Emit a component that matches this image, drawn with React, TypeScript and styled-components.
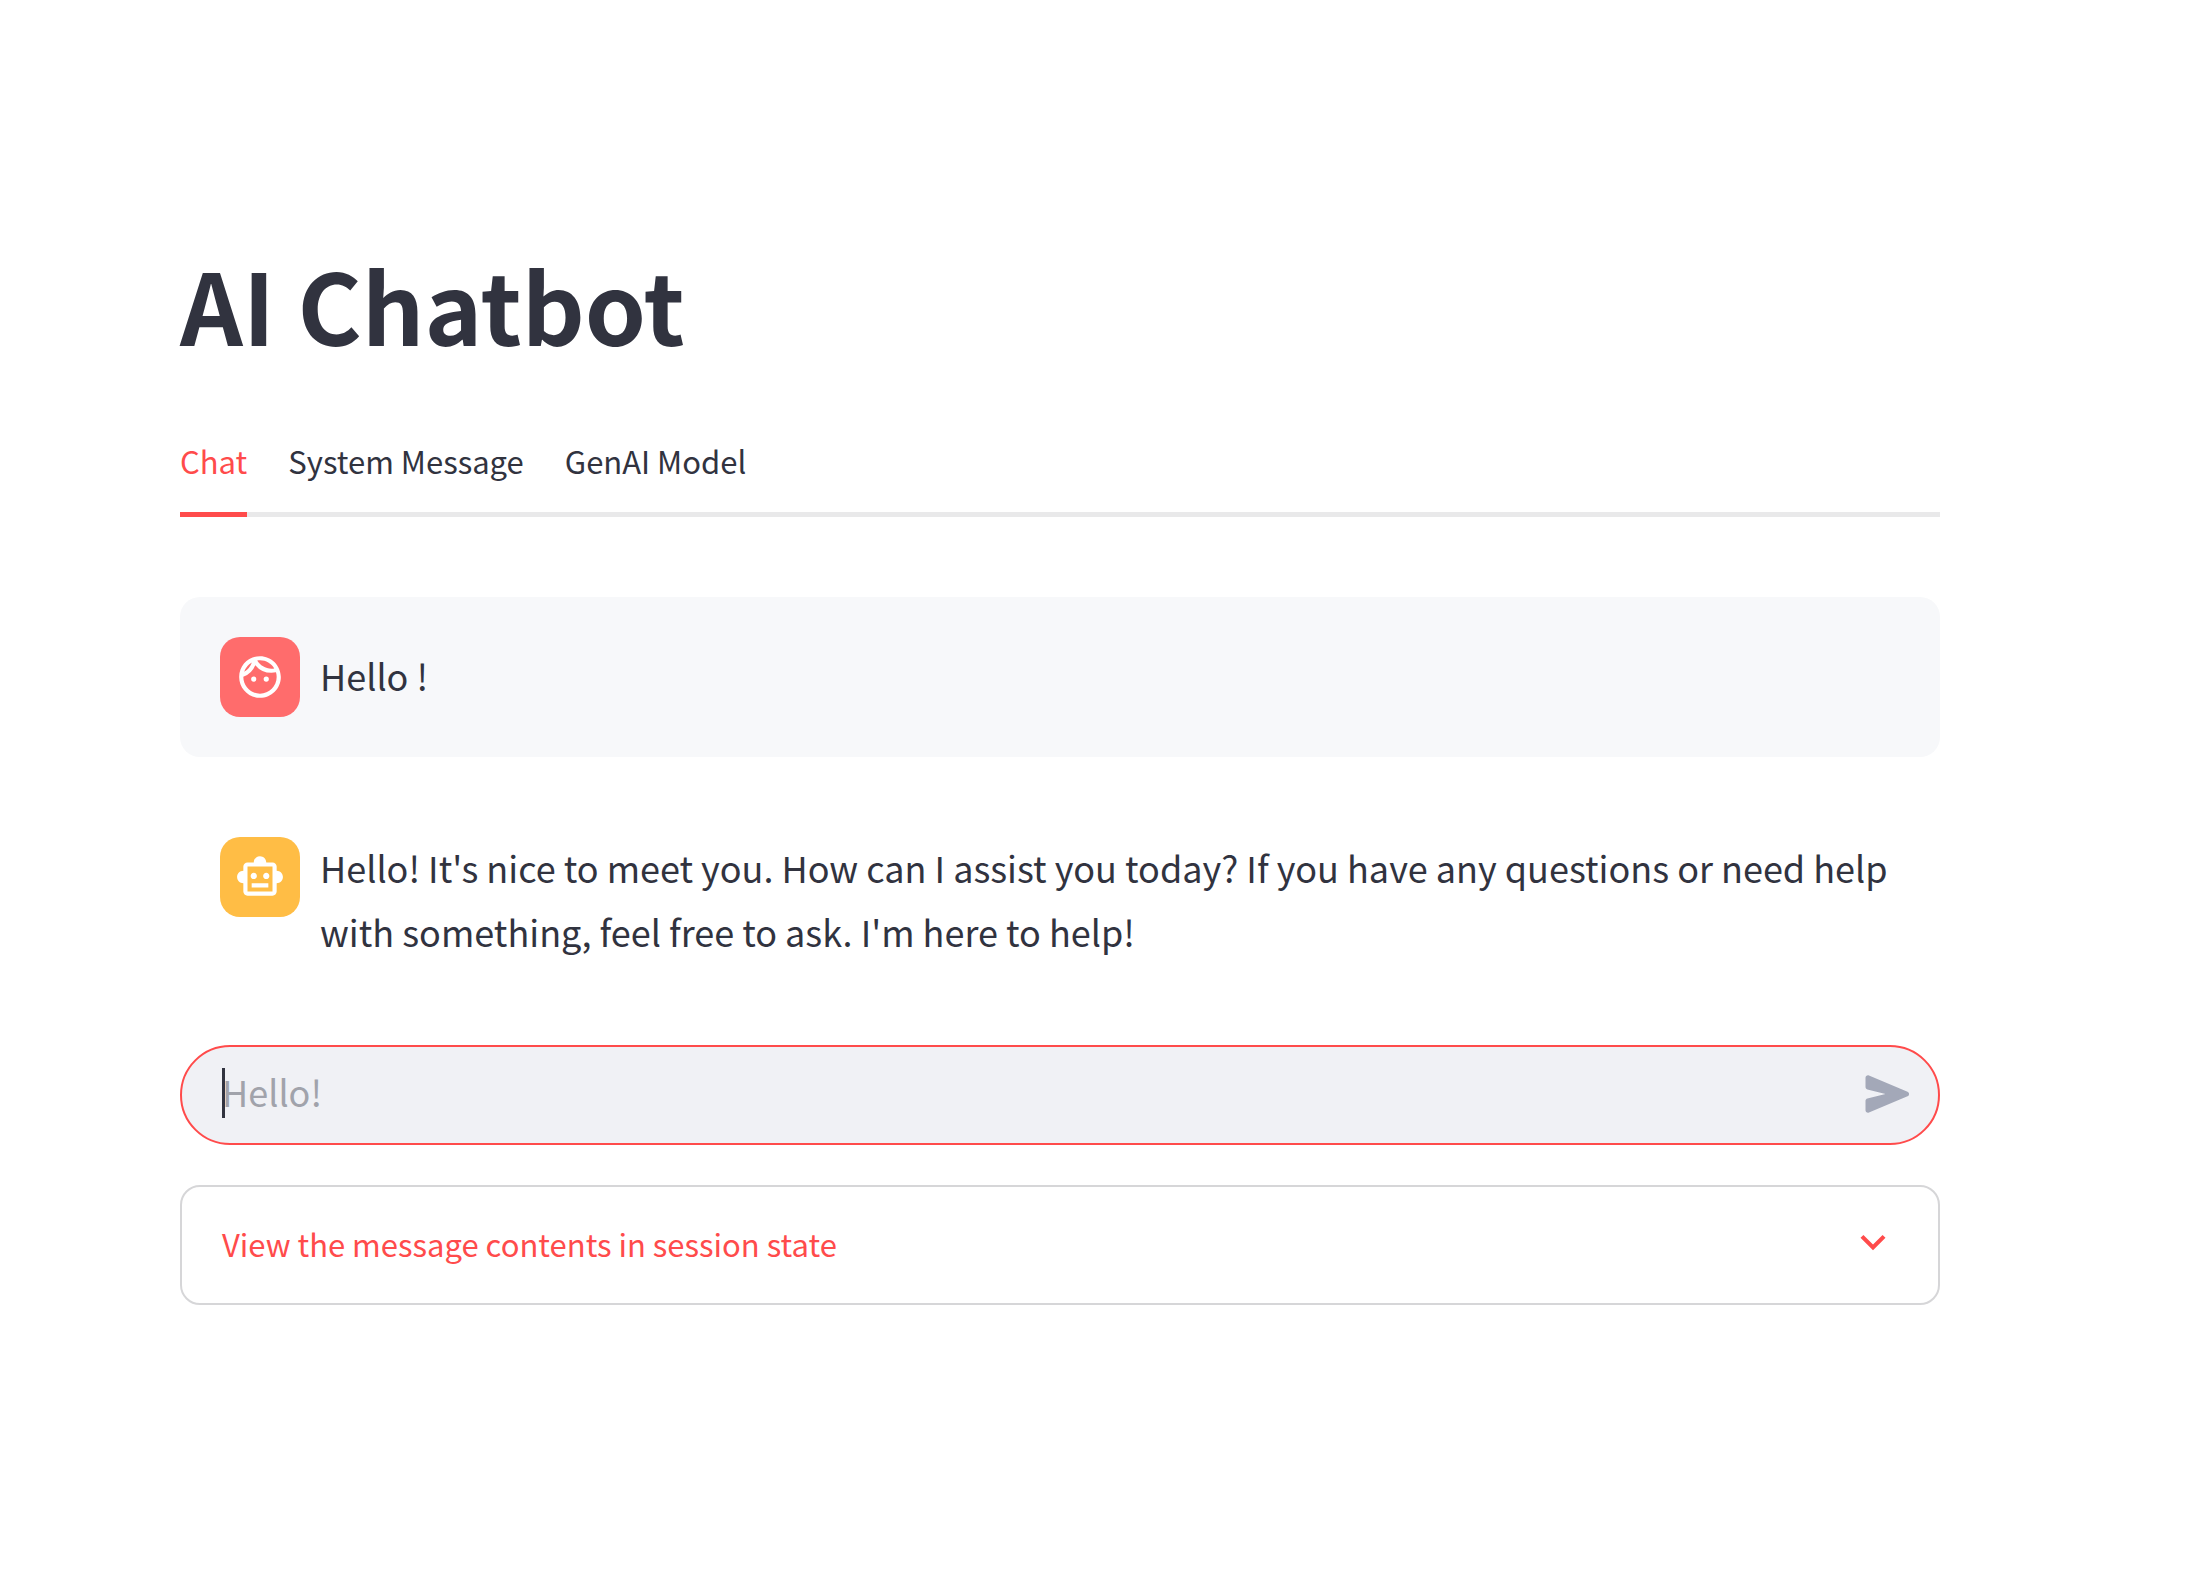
import React, { useState } from "react";
import styled, { createGlobalStyle } from "styled-components";
import { MdExpandMore, MdOutlineFace, MdOutlineSmartToy } from "react-icons/md";

const color = {
  text: "#31333f",
  primary: "#ff4b4b",
  track: "#e9e9ea",
  card: "#f7f8fa",
  field: "#f0f1f5",
  placeholder: "#a1a3ab",
  send: "#a3a8b8",
  border: "#d6d6d8",
  user: "#ff6c6c",
  assistant: "#ffbd45",
};

const GlobalStyle = createGlobalStyle`
  *, *::before, *::after { box-sizing: border-box; }
  body {
    margin: 0;
    background: #ffffff;
    color: ${color.text};
    font-family: "Noto Sans CJK SC", "Noto Sans", sans-serif;
    font-size: 36px;
  }
  button, input { font: inherit; color: inherit; }
`;

const Page = styled.main`
  display: flex;
  flex-direction: column;
  padding: 237px 252px 237px 180px;
`;

const Title = styled.h1`
  margin: 0 0 47px;
  font-size: 98px;
  font-weight: 700;
  line-height: 132px;
`;

const TabList = styled.div`
  display: flex;
  gap: 41px;
  margin-bottom: 80px;
  border-bottom: 5px solid ${color.track};
`;

const Tab = styled.button<{ $active: boolean }>`
  margin: 0 0 -5px;
  padding: 21px 0 27px;
  border: 0;
  border-bottom: 5px solid ${(p) => (p.$active ? color.primary : "transparent")};
  background: none;
  color: ${(p) => (p.$active ? color.primary : color.text)};
  font-size: 31px;
  line-height: 48px;
  white-space: nowrap;
  cursor: pointer;
`;

const Panel = styled.section`
  display: flex;
  flex-direction: column;
  gap: 40px;
`;

const Message = styled.article<{ $filled: boolean }>`
  display: flex;
  align-items: flex-start;
  gap: 20px;
  padding: 40px;
  border-radius: 20px;
  background: ${(p) => (p.$filled ? color.card : "transparent")};
`;

const Avatar = styled.div<{ $role: Role }>`
  display: flex;
  flex: none;
  align-items: center;
  justify-content: center;
  width: 80px;
  height: 80px;
  border-radius: 20px;
  background: ${(p) => color[p.$role]};
  color: #ffffff;
`;

const MessageText = styled.p`
  flex: 1;
  align-self: center;
  min-width: 0;
  margin: -2px 0 2px;
  line-height: 64px;
`;

const ChatForm = styled.form`
  display: flex;
  align-items: center;
  padding: 17px 20px 19px 40px;
  border: 2px solid ${color.primary};
  border-radius: 50px;
  background: ${color.field};
`;

const Caret = styled.span`
  flex: none;
  width: 3px;
  height: 50px;
  margin: 0 -3px 2px 0;
  background: ${color.text};
`;

const ChatInput = styled.input`
  flex: 1;
  min-width: 0;
  height: 60px;
  padding: 0 0 6px;
  border: 0;
  outline: 0;
  background: none;
  &::placeholder {
    color: ${color.placeholder};
    opacity: 1;
  }
`;

const SendButton = styled.button`
  display: flex;
  flex: none;
  padding: 0;
  border: 0;
  background: none;
  color: ${color.send};
  cursor: pointer;
`;

const Expander = styled.details`
  border: 2px solid ${color.border};
  border-radius: 20px;
`;

const ExpanderSummary = styled.summary`
  display: flex;
  align-items: flex-start;
  justify-content: space-between;
  padding: 30px 40px 32px;
  color: ${color.primary};
  font-size: 31px;
  line-height: 54px;
  list-style: none;
  cursor: pointer;
`;

const ExpanderBody = styled.ul`
  margin: 0;
  padding: 0 40px 32px 80px;
  font-size: 31px;
  line-height: 54px;
`;

type Role = "user" | "assistant";

const messages: { role: Role; text: string }[] = [
  { role: "user", text: "Hello !" },
  {
    role: "assistant",
    text: "Hello! It's nice to meet you. How can I assist you today? If you have any questions or need help with something, feel free to ask. I'm here to help!",
  },
];

const tabs = ["Chat", "System Message", "GenAI Model"];

function SendIcon() {
  return (
    <svg width="60" height="60" viewBox="0 0 24 24" fill="currentColor" aria-hidden="true">
      <path d="M3 5.51v3.71c0 .46.31.86.76.97L11 12l-7.24 1.81c-.45.11-.76.51-.76.97v3.71c0 .72.73 1.2 1.39.92l15.42-6.49c.82-.34.82-1.5 0-1.84L4.39 4.58C3.73 4.31 3 4.79 3 5.51z" />
    </svg>
  );
}

export default function App() {
  const [active, setActive] = useState(tabs[0]);
  const [draft, setDraft] = useState("");

  return (
    <>
      <GlobalStyle />
      <Page>
        <Title>AI Chatbot</Title>
        <TabList role="tablist">
          {tabs.map((name) => (
            <Tab
              key={name}
              type="button"
              role="tab"
              aria-selected={name === active}
              $active={name === active}
              onClick={() => setActive(name)}
            >
              {name}
            </Tab>
          ))}
        </TabList>
        <Panel role="tabpanel">
          {messages.map((m) => (
            <Message key={m.role} $filled={m.role === "user"}>
              <Avatar $role={m.role}>
                {m.role === "user" ? <MdOutlineFace size={50} /> : <MdOutlineSmartToy size={50} />}
              </Avatar>
              <MessageText>{m.text}</MessageText>
            </Message>
          ))}
          <ChatForm onSubmit={(e) => e.preventDefault()}>
            {draft === "" && <Caret />}
            <ChatInput
              aria-label="Chat message"
              placeholder="Hello!"
              value={draft}
              onChange={(e) => setDraft(e.target.value)}
            />
            <SendButton type="submit" aria-label="Send message">
              <SendIcon />
            </SendButton>
          </ChatForm>
          <Expander>
            <ExpanderSummary>
              View the message contents in session state
              <MdExpandMore size={50} />
            </ExpanderSummary>
            <ExpanderBody>
              {messages.map((m) => (
                <li key={m.role}>{m.text}</li>
              ))}
            </ExpanderBody>
          </Expander>
        </Panel>
      </Page>
    </>
  );
}
